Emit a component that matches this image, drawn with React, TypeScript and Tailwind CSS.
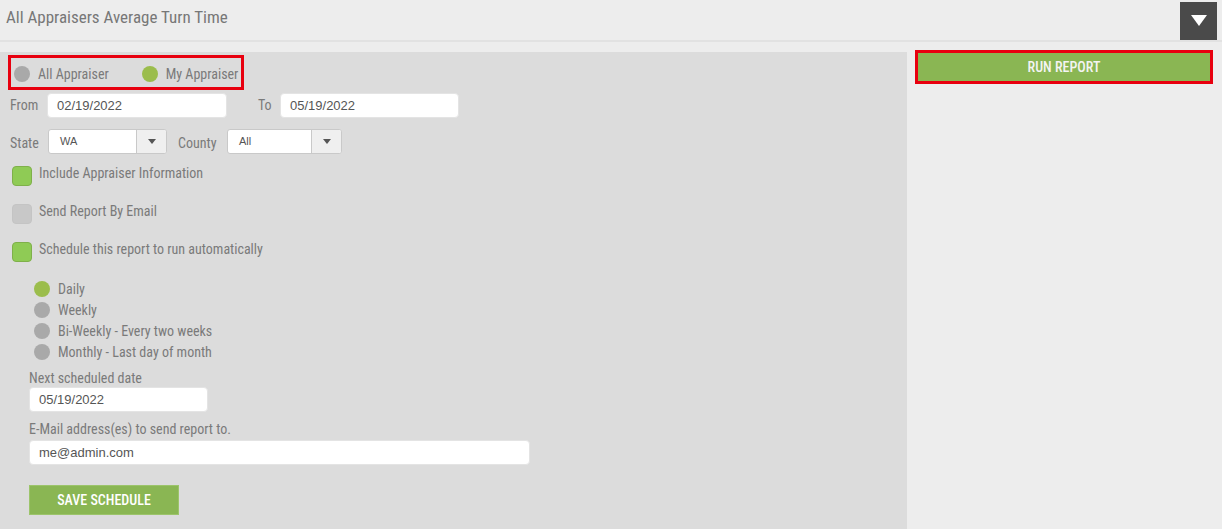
const cond = "font-['Roboto_Condensed','Liberation_Sans_Narrow',Roboto,sans-serif]";

function Radio({ on, label }: { on?: boolean; label: string }) {
  return (
    <div className="flex items-center gap-[8px] h-[20px]">
      <span className={`w-[16px] h-[16px] rounded-full ${on ? "bg-[#9bbd4c]" : "bg-[#a9a9a9]"}`} />
      <span className={`${cond} text-[14px] leading-[20px] text-[#7a7a7a]`}>{label}</span>
    </div>
  );
}

function Check({ on, label }: { on?: boolean; label: string }) {
  return (
    <div className="flex items-start gap-[7px]">
      <span
        className={`mt-[1px] w-[20px] h-[20px] rounded-[4px] border ${
          on ? "bg-[#8fcb55] border-[#7fb04a]" : "bg-[#c8c8c8] border-[#c4c4c4]"
        }`}
      />
      <span className={`${cond} text-[14px] text-[#7a7a7a] leading-[16px]`}>{label}</span>
    </div>
  );
}

function Select({ value, w }: { value: string; w: string }) {
  return (
    <div className={`${w} h-[25px] flex bg-white border border-[#c9c9c9] rounded-[3px] overflow-hidden`}>
      <span className="flex-1 pl-[11px] text-[11px] leading-[23px] text-[#555] font-['Liberation_Sans',Arial,sans-serif]">
        {value}
      </span>
      <span className="w-[30px] border-l border-[#c9c9c9] bg-[#efefef] flex items-center justify-center">
        <svg width="8" height="5" viewBox="0 0 8 5">
          <path d="M0 0h8L4 5z" fill="#555" />
        </svg>
      </span>
    </div>
  );
}

function Field({ value, w }: { value: string; w: string }) {
  return (
    <div
      className={`${w} h-[25px] bg-white rounded-[4px] border border-[#e4e4e4] pl-[9px] text-[13px] leading-[23px] text-[#555] font-['Liberation_Sans',Arial,sans-serif]`}
    >
      {value}
    </div>
  );
}

export default function App() {
  return (
    <div className="w-[1222px] h-[529px] bg-[#ededed] flex flex-col overflow-hidden">
      {/* Header */}
      <div className="h-[42px] shrink-0 flex items-center justify-between border-b-2 border-[#e2e2e2] pl-[6px] pr-[5px]">
        <h1 className={`${cond} text-[17px] text-[#777] -mt-[5px]`}>
          All Appraisers Average Turn Time
        </h1>
        <button className="w-[37px] h-[38px] bg-[#4a4a4a] flex items-center justify-center mt-[1px]">
          <svg width="16" height="11" viewBox="0 0 16 11">
            <path d="M0 0h16L8 11z" fill="#fff" />
          </svg>
        </button>
      </div>

      <div className="flex flex-1 pt-[10px]">
        {/* Left form */}
        <div className="w-[907px] bg-[#dcdcdc] pt-[3px] pl-[8px] flex flex-col">
          <div className="w-[236px] h-[35px] border-[3px] border-[#e8000f] flex items-center gap-[33px] pl-[3px] pt-[3px]">
            <Radio label="All Appraiser" />
            <Radio on label="My Appraiser" />
          </div>

          <div className="flex items-center mt-[3px] pl-[2px]">
            <span className={`${cond} text-[14px] text-[#7a7a7a] w-[37px]`}>From</span>
            <Field value="02/19/2022" w="w-[180px]" />
            <span className={`${cond} text-[14px] text-[#7a7a7a] ml-[31px] w-[22px]`}>To</span>
            <Field value="05/19/2022" w="w-[179px]" />
          </div>

          <div className="flex items-center mt-[11px] pl-[2px]">
            <span className={`${cond} text-[14px] text-[#7a7a7a] w-[38px] mt-[3px]`}>State</span>
            <Select value="WA" w="w-[119px]" />
            <span className={`${cond} text-[14px] text-[#7a7a7a] ml-[11px] w-[49px] mt-[3px]`}>County</span>
            <Select value="All" w="w-[115px]" />
          </div>

          <div className="flex flex-col gap-[17px] mt-[11px] pl-[4px]">
            <Check on label="Include Appraiser Information" />
            <Check label="Send Report By Email" />
            <Check on label="Schedule this report to run automatically" />
          </div>

          <div className="flex flex-col gap-[1px] mt-[17px] pl-[26px]">
            <Radio on label="Daily" />
            <Radio label="Weekly" />
            <Radio label="Bi-Weekly - Every two weeks" />
            <Radio label="Monthly - Last day of month" />
          </div>

          <div className="pl-[21px] mt-[7px] flex flex-col">
            <span className={`${cond} text-[14px] text-[#7a7a7a] leading-[18px]`}>Next scheduled date</span>
            <Field value="05/19/2022" w="w-[179px]" />
            <span className={`${cond} text-[14px] text-[#7a7a7a] leading-[18px] mt-[8px]`}>
              E-Mail address(es) to send report to.
            </span>
            <Field value="me@admin.com" w="w-[501px] mt-[2px]" />
            <button
              className={`${cond} mt-[20px] w-[150px] h-[30px] bg-[#8ab653] border border-[#9cc46a] text-white text-[14px] font-medium uppercase`}
            >
              Save Schedule
            </button>
          </div>
        </div>

        {/* Right panel */}
        <div className="flex-1 pl-[8px] pr-[9px] -mt-[2px]">
          <button
            className={`${cond} w-full h-[34px] border-[3px] border-[#e8000f] bg-[#8ab653] text-[#f4f4f4] text-[14px] font-medium uppercase flex items-center justify-center`}
          >
            Run Report
          </button>
        </div>
      </div>
    </div>
  );
}
